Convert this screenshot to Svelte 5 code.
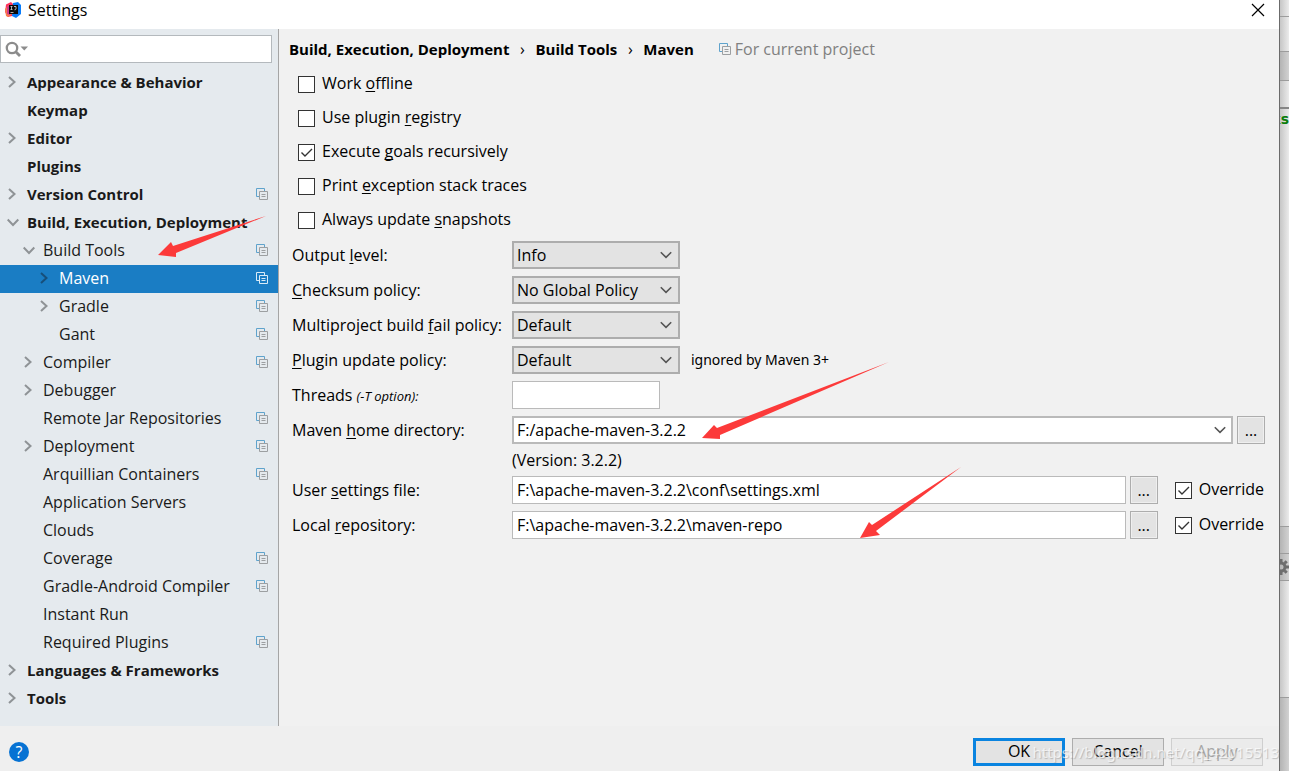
<script>
	// state: 'open' | 'closed' | 'leaf'
	const tree = [
		{ name: 'Appearance & Behavior', level: 0, state: 'closed' },
		{ name: 'Keymap', level: 0, state: 'leaf' },
		{ name: 'Editor', level: 0, state: 'closed' },
		{ name: 'Plugins', level: 0, state: 'leaf' },
		{ name: 'Version Control', level: 0, state: 'closed', project: true },
		{ name: 'Build, Execution, Deployment', level: 0, state: 'open' },
		{ name: 'Build Tools', level: 1, state: 'open', project: true },
		{ name: 'Maven', level: 2, state: 'closed', project: true },
		{ name: 'Gradle', level: 2, state: 'closed', project: true },
		{ name: 'Gant', level: 2, state: 'leaf', project: true },
		{ name: 'Compiler', level: 1, state: 'closed', project: true },
		{ name: 'Debugger', level: 1, state: 'closed' },
		{ name: 'Remote Jar Repositories', level: 1, state: 'leaf', project: true },
		{ name: 'Deployment', level: 1, state: 'closed', project: true },
		{ name: 'Arquillian Containers', level: 1, state: 'leaf', project: true },
		{ name: 'Application Servers', level: 1, state: 'leaf' },
		{ name: 'Clouds', level: 1, state: 'leaf' },
		{ name: 'Coverage', level: 1, state: 'leaf', project: true },
		{ name: 'Gradle-Android Compiler', level: 1, state: 'leaf', project: true },
		{ name: 'Instant Run', level: 1, state: 'leaf' },
		{ name: 'Required Plugins', level: 1, state: 'leaf', project: true },
		{ name: 'Languages & Frameworks', level: 0, state: 'closed' },
		{ name: 'Tools', level: 0, state: 'closed' }
	];

	let selected = $state('Maven');
	let query = $state('');

	// label is split around its mnemonic letter
	let options = $state([
		{ id: 'offline', label: ['Work ', 'o', 'ffline'], checked: false },
		{ id: 'registry', label: ['Use plugin ', 'r', 'egistry'], checked: false },
		{ id: 'recursive', label: ['Execute ', 'g', 'oals recursively'], checked: true },
		{ id: 'traces', label: ['Print ', 'e', 'xception stack traces'], checked: false },
		{ id: 'snapshots', label: ['Always update ', 's', 'napshots'], checked: false }
	]);

	let policies = $state([
		{
			id: 'output',
			label: ['Output ', 'l', 'evel:'],
			value: 'Info',
			choices: ['Debug', 'Info', 'Warn', 'Error']
		},
		{
			id: 'checksum',
			label: ['', 'C', 'hecksum policy:'],
			value: 'No Global Policy',
			choices: ['No Global Policy', 'Fail', 'Warn']
		},
		{
			id: 'fail',
			label: ['Multiproject build ', 'f', 'ail policy:'],
			value: 'Default',
			choices: ['Default', 'Fail Fast', 'Fail Never']
		},
		{
			id: 'update',
			label: ['', 'P', 'lugin update policy:'],
			value: 'Default',
			choices: ['Default', 'Check For Updates', 'Do Not Update'],
			note: 'ignored by Maven 3+'
		}
	]);

	let threads = $state('');
	let home = $state('F:/apache-maven-3.2.2');

	let paths = $state([
		{
			id: 'settings',
			label: ['User ', 's', 'ettings file:'],
			value: 'F:\\apache-maven-3.2.2\\conf\\settings.xml',
			override: true
		},
		{
			id: 'repo',
			label: ['Local ', 'r', 'epository:'],
			value: 'F:\\apache-maven-3.2.2\\maven-repo',
			override: true
		}
	]);
</script>

{#snippet mnemonic(parts)}{parts[0]}<u>{parts[1]}</u>{parts[2]}{/snippet}

{#snippet projectIcon()}
	<svg class="project-icon" viewBox="0 0 12 12" width="12" height="12" aria-hidden="true">
		<path class="back" d="M3 8.5H.5V.5h8V3" />
		<path class="front" d="M3.5 3.5h8v8h-8zM5.5 6.5h4M5.5 8.5h4" />
	</svg>
{/snippet}

{#snippet chevron()}
	<svg class="chevron" viewBox="0 0 12 8" width="12" height="8" aria-hidden="true">
		<path d="M.8 1.2 6 6.4l5.200-5.200" />
	</svg>
{/snippet}

<div class="screen">
	<div class="dialog">
		<header class="titlebar">
			<svg viewBox="0 0 16 16" width="16" height="16" aria-hidden="true">
				<path d="M1 2.500 6 0l3 3-2 11-4 1-3-5z" fill="#fe315d" />
				<path d="M0 7 4 3l3 9-4 3-2-1z" fill="#f97a4a" />
				<path d="M8 1l5-1 3 3v9l-5 4-4-2z" fill="#087cfa" />
				<path d="M2 5l3-2v10l-3-1z" fill="#d13a8f" />
				<path d="M4 3h9v9H4z" fill="#0b0b0b" />
				<path d="M5.500 4.500h2M6.500 4.500v3M5.500 7.500h2M9 4.500h2V7q0 .8-1.500.8M5.500 10.500h3" stroke="#ddd" stroke-width=".8" fill="none" />
			</svg>
			<h1>Settings</h1>
			<button class="close" aria-label="Close">
				<svg viewBox="0 0 14 14" width="14" height="14"><path d="M1 1l12 12M13 1 1 13" /></svg>
			</button>
		</header>

		<div class="body">
			<aside>
				<label class="search">
					<svg viewBox="0 0 24 18" width="24" height="18" aria-hidden="true">
						<circle cx="7" cy="8" r="5.200" fill="none" stroke="#8c8c8c" stroke-width="2.300" />
						<path d="M10.500 11.500 15 16" stroke="#8c8c8c" stroke-width="2.800" />
						<path d="M15.500 6.500h7.500l-3.700 4z" fill="#8c8c8c" />
					</svg>
					<input type="text" aria-label="Search settings" bind:value={query} />
				</label>

				<ul class="tree">
					{#each tree as item (item.name)}
						<li>
							<button
								class="node level-{item.level}"
								class:selected={item.name === selected}
								onclick={() => (selected = item.name)}
							>
								<svg class="arrow" viewBox="0 0 12 12" width="12" height="12" aria-hidden="true">
									{#if item.state === 'closed'}
										<path d="M2 1 7.500 6 2 11" />
									{:else if item.state === 'open'}
										<path d="M.7 3.500 6 9l5.300-5.500" />
									{/if}
								</svg>
								<span class="name">{item.name}</span>
								{#if item.project}
									{@render projectIcon()}
								{/if}
							</button>
						</li>
					{/each}
				</ul>
			</aside>

			<main>
				<nav class="crumbs" aria-label="Breadcrumb">
					<b>Build, Execution, Deployment</b>
					<span class="sep">›</span>
					<b>Build Tools</b>
					<span class="sep">›</span>
					<b>Maven</b>
					<span class="scope">{@render projectIcon()}For current project</span>
				</nav>

				<div class="options">
					{#each options as option (option.id)}
						<label class="check">
							<input type="checkbox" bind:checked={option.checked} />
							<span>{@render mnemonic(option.label)}</span>
						</label>
					{/each}
				</div>

				<div class="form">
					{#each policies as policy (policy.id)}
						<label for={policy.id}>{@render mnemonic(policy.label)}</label>
						<div class="field">
							<span class="select">
								<select id={policy.id} bind:value={policy.value}>
									{#each policy.choices as choice}
										<option>{choice}</option>
									{/each}
								</select>
								{@render chevron()}
							</span>
							{#if policy.note}
								<span class="note">{policy.note}</span>
							{/if}
						</div>
					{/each}

					<label for="threads">Threads <i>(-T option):</i></label>
					<div class="field">
						<input id="threads" class="text short" type="text" bind:value={threads} />
					</div>

					<label for="home">Maven <u>h</u>ome directory:</label>
					<div class="field">
						<span class="combo">
							<input id="home" type="text" bind:value={home} />
							<button aria-label="Show directories">{@render chevron()}</button>
						</span>
						<button class="browse" aria-label="Browse">...</button>
					</div>

					<div class="version">(Version: 3.2.2)</div>

					{#each paths as path (path.id)}
						<label for={path.id}>{@render mnemonic(path.label)}</label>
						<div class="field">
							<input id={path.id} class="text" type="text" bind:value={path.value} />
							<button class="browse" aria-label="Browse">...</button>
							<label class="check override">
								<input type="checkbox" bind:checked={path.override} />
								<span>Override</span>
							</label>
						</div>
					{/each}
				</div>
			</main>
		</div>

		<footer>
			<button class="help" aria-label="Help">?</button>
			<button class="action default">OK</button>
			<button class="action">Cancel</button>
			<button class="action" disabled>Apply</button>
			<span class="watermark">https://blog.csdn.net/qq_42015513</span>
		</footer>

		<svg class="marks" viewBox="0 0 1279 771" width="1279" height="771" aria-hidden="true">
			<path d="M158 255l13-13 2 4 93-30-90 37v4z" />
			<path d="M702 438l12-13 3 3 172-66-169 73v4z" />
			<path d="M860 538l9-16 3 3 89-58-85 64 4 4z" />
		</svg>
	</div>

	<!-- edge of the editor window behind the dialog -->
	<div class="behind">
		<div class="strip toolbar"></div>
		<div class="strip nav"></div>
		<div class="strip dark tabs"></div>
		<div class="strip crumb"></div>
		<div class="strip code">ks</div>
		<div class="strip editor"></div>
		<div class="strip dark status"></div>
		<div class="strip dark gear">
			<svg viewBox="0 0 16 16" width="16" height="16" aria-hidden="true">
				<circle cx="8" cy="8" r="4" fill="none" stroke="#6e6e6e" stroke-width="3" />
				<path d="M8 0v3M8 13v3M0 8h3M13 8h3M2.300 2.300l2 2M11.700 11.700l2 2M2.300 13.700l2-2M11.700 4.300l2-2" stroke="#6e6e6e" stroke-width="3" />
			</svg>
		</div>
		<div class="strip console"></div>
		<div class="strip dark rest"></div>
	</div>
</div>

<style>
	:global(body) {
		margin: 0;
		overflow-x: hidden;
	}

	.screen {
		display: flex;
		min-height: 100vh;
		font-family: 'Open Sans', 'Noto Sans', sans-serif;
		font-size: 16px;
		line-height: 20px;
		color: #000;
	}

	button,
	input,
	select {
		box-sizing: border-box;
		margin: 0;
		font: inherit;
		color: inherit;
		border-radius: 0;
		outline: none;
	}

	u {
		text-decoration-thickness: 1px;
		text-underline-offset: 2px;
		text-decoration-skip-ink: none;
	}

	.dialog {
		position: relative;
		flex: 1;
		min-width: 0;
		display: flex;
		flex-direction: column;
		background: #f1f1f1;
	}

	/* title bar */
	.titlebar {
		display: flex;
		align-items: center;
		gap: 7px;
		height: 29px;
		padding: 0 14px 9px 5px;
		box-sizing: border-box;
		background: #fff;
	}

	h1 {
		flex: 1;
		margin: 0;
		font-size: 16px;
		font-weight: 400;
	}

	.close {
		display: flex;
		padding: 0;
		border: none;
		background: none;
	}

	.close path {
		stroke: #000;
		stroke-width: 1.2;
	}

	.body {
		flex: 1;
		display: flex;
	}

	/* settings tree */
	aside {
		width: 278px;
		flex: none;
		padding-top: 6px;
		border-right: 1px solid #a5a5a5;
		background: #e5eaee;
	}

	.search {
		display: flex;
		align-items: center;
		height: 28px;
		margin-right: 6px;
		padding-left: 4px;
		box-sizing: border-box;
		border: 1px solid #b4b9bd;
		background: #fff;
	}

	.search input {
		flex: 1;
		min-width: 0;
		border: none;
		background: none;
	}

	.tree {
		margin: 6px 0 0;
		padding: 0;
		list-style: none;
	}

	.node {
		display: flex;
		align-items: center;
		width: 100%;
		height: 28px;
		padding: 0 10px 2px 7px;
		border: none;
		background: none;
		color: #1a1a1a;
		text-align: left;
	}

	.level-0,
	.crumbs b {
		font-size: 15px;
		font-weight: 700;
	}

	.level-1 {
		padding-left: 23px;
	}

	.level-2 {
		padding-left: 39px;
	}

	.node.selected {
		background: #1a7dc4;
		color: #fff;
	}

	.arrow {
		flex: none;
		margin-right: 8px;
		fill: none;
		stroke: #8f9396;
		stroke-width: 2;
	}

	.selected .arrow {
		stroke: #174f7a;
	}

	.name {
		flex: 1;
		white-space: nowrap;
	}

	.project-icon {
		flex: none;
		fill: none;
	}

	.back {
		stroke: #5fa3cc;
	}

	.front {
		stroke: #9c9fa1;
	}

	.selected .back,
	.selected .front {
		stroke: #d9ebf7;
	}

	/* page */
	main {
		flex: 1;
		min-width: 0;
		padding: 10px 14px 0 13px;
	}

	.crumbs {
		display: flex;
		align-items: center;
		margin-left: -3px;
		white-space: nowrap;
	}

	.sep {
		width: 26px;
		text-align: center;
	}

	.scope {
		display: flex;
		align-items: center;
		gap: 4px;
		margin-left: 25px;
		color: #808080;
	}

	.options {
		display: flex;
		flex-direction: column;
		align-items: flex-start;
		gap: 14px;
		margin: 15px 0 11px 6px;
	}

	.check {
		display: flex;
		align-items: center;
		gap: 7px;
		white-space: nowrap;
	}

	.check span {
		height: 20px;
		line-height: 18px;
	}

	.check input {
		appearance: none;
		width: 17px;
		height: 17px;
		border: 1px solid #333;
		background: #fff;
	}

	.check input:checked {
		background: #fff
			url("data:image/svg+xml,%3Csvg xmlns='http://www.w3.org/2000/svg' viewBox='0 0 15 15'%3E%3Cpath d='M2.500 7.500l3.500 3.500 7-7' fill='none' stroke='%23333' stroke-width='1.400'/%3E%3C/svg%3E");
	}

	.form {
		display: grid;
		grid-template-columns: 220px 1fr;
		row-gap: 7px;
		align-items: center;
		white-space: nowrap;
	}

	.form i {
		font-size: 13px;
	}

	.field {
		display: flex;
		align-items: center;
		height: 28px;
	}

	.select {
		display: grid;
		align-items: center;
		width: 168px;
	}

	.select select,
	.select .chevron {
		grid-area: 1 / 1;
	}

	.select select {
		appearance: none;
		width: 100%;
		height: 28px;
		padding: 0 28px 0 3px;
		border: 2px solid #adadad;
		background: #e3e3e3;
	}

	.select .chevron {
		justify-self: end;
		margin-right: 8px;
		pointer-events: none;
	}

	.chevron {
		fill: none;
		stroke: #555;
		stroke-width: 1.6;
	}

	.note {
		margin-left: 11px;
		font-family: 'Noto Sans', 'Open Sans', sans-serif;
		font-size: 14px;
	}

	.text {
		flex: 1;
		min-width: 0;
		height: 28px;
		padding: 0 4px;
		border: 1px solid #bababa;
		background: #fff;
	}

	.text.short {
		flex: none;
		width: 148px;
	}

	.combo {
		flex: 1;
		min-width: 0;
		display: flex;
		height: 28px;
		box-sizing: border-box;
		border: 2px solid #bababa;
		background: #fff;
	}

	.combo input {
		flex: 1;
		min-width: 0;
		padding: 0 3px;
		border: none;
		background: none;
	}

	.combo button {
		display: flex;
		align-items: center;
		padding: 0 5px;
		border: none;
		background: none;
	}

	.browse {
		width: 28px;
		height: 28px;
		margin-left: 4px;
		padding: 0;
		border: 1px solid #adadad;
		background: #e3e3e3;
		box-shadow: inset 0 0 0 1px #efefef;
	}

	.version {
		grid-column: 2;
		height: 18px;
		line-height: 18px;
	}

	.override {
		margin: 0 1px 0 17px;
	}

	/* buttons */
	footer {
		display: flex;
		align-items: center;
		gap: 7px;
		height: 45px;
		padding: 7px 16px 0 9px;
		box-sizing: border-box;
		background: #efefef;
	}

	.help {
		width: 20px;
		height: 20px;
		margin-right: auto;
		padding: 0;
		border: none;
		border-radius: 50%;
		background: #0672d3;
		color: #fff;
		line-height: 20px;
	}

	.action {
		width: 92px;
		height: 28px;
		padding: 0 0 2px;
		border: 1px solid #adadad;
		background: #e3e3e3;
	}

	.action.default {
		border: 3px solid #0a84e0;
	}

	.action:disabled {
		border-color: #cfcfcf;
		background: #ebebeb;
		color: #a6a6a6;
	}

	.watermark {
		position: absolute;
		right: 0;
		bottom: 9px;
		font-family: 'Noto Sans', 'Open Sans', sans-serif;
		font-size: 15px;
		color: rgba(255, 255, 255, 0.7);
		text-shadow: 1px 1px 1px rgba(140, 140, 140, 0.5);
		pointer-events: none;
	}

	.marks {
		position: absolute;
		top: 0;
		left: 0;
		fill: #fc3a3a;
		pointer-events: none;
	}

	/* window behind */
	.behind {
		display: flex;
		flex-direction: column;
		width: 9px;
		flex: none;
		overflow: hidden;
		border-left: 1px solid #6b6b6b;
	}

	.strip {
		flex: none;
		box-sizing: border-box;
		border-bottom: 1px solid #9c9c9c;
		background: linear-gradient(to right, #c6c6c6, #ebebeb);
	}

	.dark {
		background: linear-gradient(to right, #b4b4b4, #d2d2d2);
	}

	.toolbar {
		height: 17px;
	}

	.nav {
		height: 35px;
	}

	.tabs {
		height: 29px;
	}

	.crumb {
		height: 28px;
		border-bottom: 2px solid #858585;
	}

	.code {
		display: flex;
		justify-content: flex-end;
		height: 21px;
		border: none;
		font-family: 'DejaVu Sans', sans-serif;
		font-size: 14px;
		font-weight: 700;
		color: #0b7d0b;
	}

	.editor {
		height: 397px;
	}

	.status {
		height: 27px;
	}

	.gear {
		display: flex;
		align-items: center;
		justify-content: flex-end;
		height: 27px;
	}

	.gear svg {
		flex: none;
	}

	.console {
		height: 117px;
	}

	.rest {
		flex: 1;
		border: none;
	}
</style>
